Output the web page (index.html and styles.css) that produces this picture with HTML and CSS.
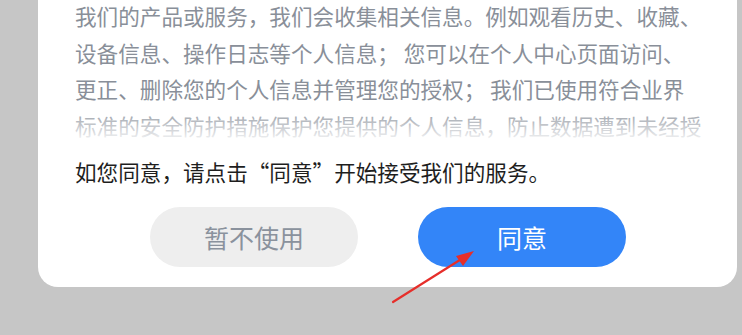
FILE: index.html
```html
<!DOCTYPE html>
<html lang="zh-CN">
<head>
  <meta charset="utf-8">
  <meta name="viewport" content="width=device-width, initial-scale=1">
  <title>隐私政策</title>
  <link rel="stylesheet" href="styles.css">
</head>
<body>
  <div class="dialog">
    <div class="policy">
      <p>我们的产品或服务，我们会收集相关信息。例如观看历史、收藏、设备信息、操作日志等个人信息； 您可以在个人中心页面访问、更正、删除您的个人信息并管理您的授权； 我们已使用符合业界标准的安全防护措施保护您提供的个人信息，防止数据遭到未经授权访问、公开披露、使用、修改、损坏或丢失。</p>
    </div>
    <p class="hint">如您同意，请点击“同意”开始接受我们的服务。</p>
    <div class="actions">
      <button class="btn btn--cancel">暂不使用</button>
      <button class="btn btn--ok">同意</button>
    </div>
  </div>

  <svg class="arrow" width="742" height="335" viewBox="0 0 742 335">
    <line x1="393" y1="302" x2="463" y2="258" stroke="#e62e2a" stroke-width="2.2" stroke-linecap="round"/>
    <polygon points="474,251 456,256 463,266" fill="#e62e2a"/>
  </svg>
</body>
</html>
```

FILE: styles.css
```css
*, *::before, *::after {
  box-sizing: border-box;
}
body {
  margin: 0;
  height: 335px;
  overflow: hidden;
  background: #c6c6c6;
  font-family: "Noto Sans CJK SC", "Noto Sans", sans-serif;
}

/* Dialog */
.dialog {
  width: 699px;
  margin-left: 38px;
  margin-top: -2px;
  padding: 0 34px 20px 37px;
  background: #fff;
  border-radius: 0 0 20px 20px;
}
.policy {
  position: relative;
  height: 146px;
  overflow: hidden;
}
.policy::after {
  content: "";
  position: absolute;
  left: 0;
  right: 0;
  bottom: 0;
  height: 32px;
  background: linear-gradient(rgba(255,255,255,0.15), #fff);
}
.policy p {
  margin: 0;
  font-size: 21.6px;
  line-height: 36.5px;
  color: #898f99;
}
.hint {
  margin: 10px 0 0;
  font-size: 21.6px;
  line-height: 36px;
  color: #1e1e1e;
}

/* Buttons */
.actions {
  display: flex;
  justify-content: center;
  gap: 60px;
  margin-top: 17px;
  padding-right: 2px;
}
.btn {
  width: 208px;
  height: 60px;
  border: none;
  border-radius: 30px;
  font-family: inherit;
  font-size: 25px;
  cursor: pointer;
}
.btn--cancel {
  background: #eeeeee;
  color: #8a929d;
}
.btn--ok {
  background: #3385f8;
  color: #fff;
}

.arrow {
  position: absolute;
  left: 0;
  top: 0;
  pointer-events: none;
}
```
